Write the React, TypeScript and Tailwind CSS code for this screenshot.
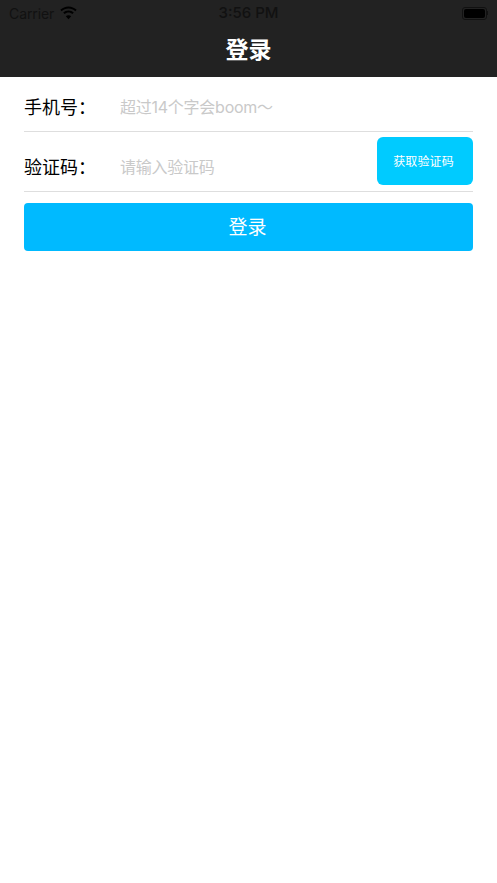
const CJK = "font-['Inter','Noto_Sans_CJK_SC',sans-serif]";

function Wifi() {
  return (
    <svg width="19" height="14" viewBox="0 0 19 14" fill="#000">
      <path d="M9.5 2.6c2.6 0 5 1 6.8 2.7l1.4-1.5C15.5 1.7 12.6.4 9.500.4S3.500 1.700 1.300 3.800l1.400 1.500C4.500 3.600 6.900 2.600 9.500 2.600z" />
      <path d="M9.500 6.600c1.500 0 2.900.6 3.900 1.500l1.400-1.500c-1.400-1.300-3.300-2.100-5.300-2.100s-3.900.8-5.300 2.100l1.400 1.500c1-.9 2.400-1.500 3.900-1.500z" />
      <path d="M9.500 13.200l2.700-2.900c-.7-.7-1.700-1.100-2.700-1.100s-2 .4-2.700 1.100z" />
    </svg>
  );
}

function Battery() {
  return (
    <div className="flex items-center">
      <div className="w-[25px] h-[13px] rounded-[3px] border border-[#111] p-[1px]">
        <div className="w-full h-full rounded-[2px] bg-black" />
      </div>
      <div className="w-[1px] h-[4px] bg-[#111]" />
    </div>
  );
}

function Row({ label, hint, className, children }: { label: string; hint: string; className: string; children?: React.ReactNode }) {
  return (
    <div className={`flex items-center border-b border-[#dedede] ${className}`}>
      <span className="w-[96px] pt-[2px] text-[18px] text-black">{label}</span>
      <span className="flex-1 text-[16px] tracking-[-0.25px] text-[#c9c9c9]">{hint}</span>
      {children}
    </div>
  );
}

export default function App() {
  return (
    <div className={`w-[497px] h-[883px] bg-white ${CJK}`}>
      <header className="h-[77px] bg-[#222222]">
        <div className="relative h-[26px] flex items-center justify-between px-[9px] text-[15px] text-[#111]">
          <div className="flex items-center gap-[5px]">
            <span className="text-[14px] tracking-[-0.1px]">Carrier</span>
            <Wifi />
          </div>
          <span className="absolute left-0 right-0 text-center font-medium">3:56 PM</span>
          <Battery />
        </div>
        <h1 className="h-[51px] flex items-center justify-center text-[23px] font-bold text-white pb-[2px]">登录</h1>
      </header>
      <main className="px-[24px]">
        <Row className="h-[55px] pt-[5px]" label="手机号：" hint="超过14个字会boom～" />
        <Row className="h-[60px] pt-[10px]" label="验证码：" hint="请输入验证码">
          <button className="w-[96px] h-[48px] -mt-[5px] self-start pt-[2px] pr-[3px] rounded-[6px] bg-[#00cbff] text-[12px] tracking-[0.1px] text-white">获取验证码</button>
        </Row>
        <button className="w-full h-[48px] mt-[11px] pt-[2px] pr-[2px] rounded-[4px] bg-[#00baff] text-[19px] text-white">登录</button>
      </main>
    </div>
  );
}
